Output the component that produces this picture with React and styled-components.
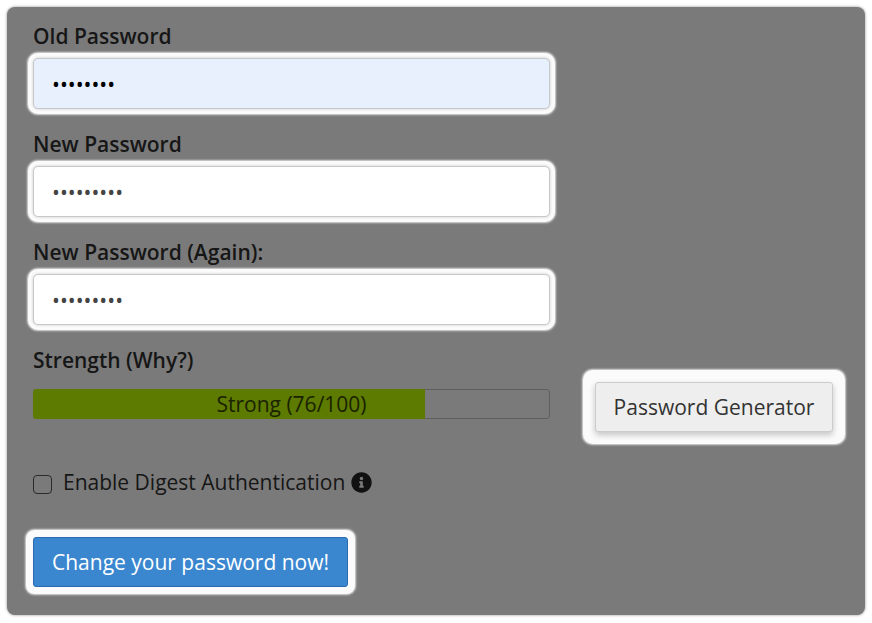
import React from 'react';
import styled, { createGlobalStyle } from 'styled-components';
import { FaInfoCircle } from 'react-icons/fa';

const GlobalStyle = createGlobalStyle`
    html, body {
        margin: 0;
        padding: 0;
        background: #fff;
    }
    body {
        font-family: "Open Sans", "Liberation Sans", sans-serif;
    }
`;

const Page = styled.div`
    padding: 7px;
    width: 872px;
    height: 623px;
    box-sizing: border-box;
`;

const Panel = styled.form`
    box-sizing: border-box;
    width: 858px;
    height: 608px;
    padding: 15px 26px 0;
    background: #7a7a7a;
    border-radius: 8px;
    box-shadow: 0 0 3px rgba(0, 0, 0, 0.45);
    color: #161616;
`;

const Field = styled.div`
    width: 517px;
    margin-bottom: 21px;
`;

const Label = styled.label`
    display: block;
    height: 36px;
    font-size: 21px;
    font-weight: 600;
    line-height: 29px;
`;

const Input = styled.input`
    display: block;
    box-sizing: border-box;
    width: 517px;
    height: 51px;
    padding: 0 18px;
    border: 1px solid #c6c9cc;
    border-radius: 5px;
    background: ${(p) => (p.$filled ? '#e8f0fe' : '#fff')};
    color: ${(p) => (p.$filled ? '#000' : '#444')};
    font-family: inherit;
    font-size: 21px;
    outline: none;
    box-shadow: 0 0 3px rgba(0, 0, 0, 0.2), 0 0 0 5px #fbfbfb, 0 0 2px 6px #dcdcdc;
`;

const StrengthRow = styled.div`
    display: flex;
    align-items: flex-start;
    gap: 45px;
`;

const StrengthCol = styled.div`
    width: 517px;
`;

const Bar = styled.div`
    position: relative;
    box-sizing: border-box;
    height: 30px;
    margin-top: 7px;
    border: 1px solid #5f5f5f;
    border-radius: 3px;
    font-size: 21px;
    line-height: 28px;
    text-align: center;
    color: #1a2200;
`;

const BarFill = styled.div`
    position: absolute;
    left: -1px;
    top: -1px;
    bottom: -1px;
    border-radius: 3px 0 0 3px;
    background: #5c7b00;
`;

const BarText = styled.span`
    position: relative;
`;

const GenButton = styled.button`
    box-sizing: border-box;
    width: 238px;
    height: 50px;
    margin-top: 36px;
    flex: none;
    border: 1px solid #ccc;
    border-radius: 3px;
    background: #eeeeee;
    color: #333;
    font-family: inherit;
    font-size: 21px;
    box-shadow: 0 3px 6px rgba(0, 0, 0, 0.22), 0 0 0 12px #fbfbfb, 0 0 2px 13px #dcdcdc;
`;

const CheckRow = styled.div`
    display: flex;
    align-items: center;
    height: 30px;
    margin-top: 35px;
    font-size: 21px;
`;

const Check = styled.input`
    appearance: none;
    box-sizing: border-box;
    width: 19px;
    height: 19px;
    margin: 5px 11px 0 0;
    border: 1.5px solid #2a2a2a;
    border-radius: 4px;
    background: transparent;
`;

const InfoIcon = styled(FaInfoCircle)`
    margin-left: 6px;
    font-size: 21px;
    color: #111;
`;

const Submit = styled.button`
    display: block;
    box-sizing: border-box;
    width: 315px;
    height: 50px;
    margin-top: 40px;
    border: 1px solid #2a6bb0;
    border-radius: 3px;
    background: #3a87d0;
    color: #fff;
    font-family: inherit;
    font-size: 21px;
    box-shadow: 0 0 0 7px #fbfbfb, 0 0 2px 8px #dcdcdc;
`;

export default function App() {
    const score = 76;
    return (
        <Page>
            <GlobalStyle />
            <Panel onSubmit={(e) => e.preventDefault()}>
                <Field>
                    <Label>Old Password</Label>
                    <Input $filled type="password" defaultValue="12345678" />
                </Field>
                <Field>
                    <Label>New Password</Label>
                    <Input type="password" defaultValue="123456789" />
                </Field>
                <Field>
                    <Label>New Password (Again):</Label>
                    <Input type="password" defaultValue="123456789" />
                </Field>
                <StrengthRow>
                    <StrengthCol>
                        <Label>Strength (Why?)</Label>
                        <Bar>
                            <BarFill style={{ width: `calc(${score}% + 1px)` }} />
                            <BarText>Strong ({score}/100)</BarText>
                        </Bar>
                    </StrengthCol>
                    <GenButton type="button">Password Generator</GenButton>
                </StrengthRow>
                <CheckRow>
                    <Check type="checkbox" />
                    Enable Digest Authentication
                    <InfoIcon />
                </CheckRow>
                <Submit type="submit">Change your password now!</Submit>
            </Panel>
        </Page>
    );
}
